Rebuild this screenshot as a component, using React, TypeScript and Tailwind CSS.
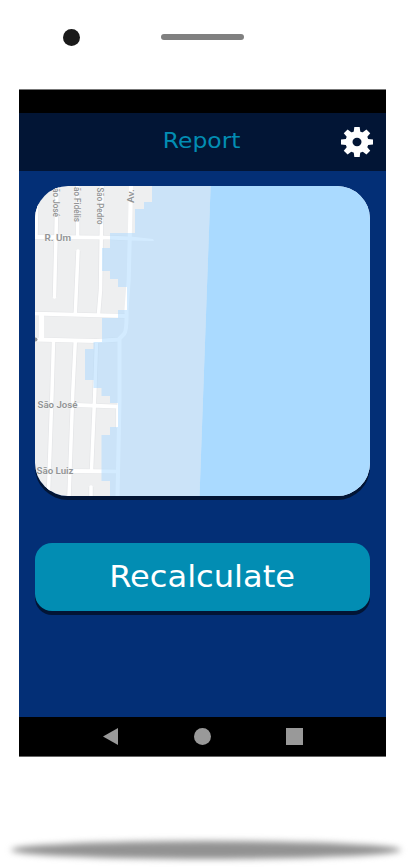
const roads = [
  'M37 186L36 237',
  'M57 186L56 237L54.5 297',
  'M77.6 186V237M78 251L75.3 314',
  'M102 186L100.5 290L98.5 314',
  'M53.5 341L52 392L48.3 497',
  'M75.3 341L72.8 392L69 497',
  'M96.5 341L94.7 395L91.5 470M91 487V497',
];

const mainRoads = [
  'M34 237L110 237.6L130 238.5',
  'M34 313.5L126 316',
  'M34 339.5L96 341L120 339.5',
  'M76 405L118 406.5V428',
  'M72 471L118 471.5',
];

function AreaMap() {
  return (
    <svg viewBox="35 186 335 310" className="block h-[310px] w-[335px]" aria-label="Map">
      <rect x="35" y="186" width="335" height="310" fill="#eeeff0" />
      <g fill="none" stroke="#e5e6e8" strokeWidth="5">
        {roads.map((d) => <path key={d} d={d} />)}
        {mainRoads.map((d) => <path key={d} d={d} />)}
      </g>
      <g fill="none" stroke="#fff" strokeWidth="3.5" strokeLinecap="round">
        {roads.map((d) => <path key={d} d={d} />)}
      </g>
      <g fill="none" stroke="#fff" strokeWidth="3.8">
        {mainRoads.map((d) => <path key={d} d={d} />)}
        <path d="M41.5 313V341" strokeWidth="5" />
        <path d="M131 186L128.7 280L126.5 310Q127 331 124 334L119.5 338.5V400L117.5 497" strokeWidth="4" />
      </g>
      <path d="M130 236.5L153 239L154 241L130 240.5Z" fill="#fff" />
      <path
        fill="#a8d8ff"
        fillOpacity="0.5"
        d="M152 186V202H144V209H135V233H110V248H102V271H110V279H118V287H127V310H118V318H102V342H93.5V349H85V380H93.5V388H101.5V396H110V403H118V427H110V435H101.5V481H110V496H199.5L207 286L210.6 186Z"
      />
      <path d="M210.6 186L207 286L199.5 496H370V186Z" fill="#aadaff" />
      <g
        fill="#929496"
        stroke="#f5f5f5"
        strokeWidth="1"
        paintOrder="stroke"
        fontSize="9.3"
        fontWeight="600"
        fontFamily="Roboto, 'Noto Sans', sans-serif"
      >
        <g fontSize="8.8" fontWeight="500">
          <text transform="translate(53 188) rotate(90)" textLength="29" lengthAdjust="spacingAndGlyphs">ão José</text>
          <text transform="translate(74.3 187) rotate(90)" textLength="35" lengthAdjust="spacingAndGlyphs">ão Fidélis</text>
          <text transform="translate(97.3 187.5) rotate(90)" textLength="37" lengthAdjust="spacingAndGlyphs">São Pedro</text>
          <text transform="translate(133.5 203) rotate(-90)" textLength="14" lengthAdjust="spacingAndGlyphs">Av.</text>
        </g>
        <text x="44.5" y="240.8" textLength="26.5" lengthAdjust="spacingAndGlyphs">R. Um</text>
        <text x="37.5" y="408" textLength="40" lengthAdjust="spacingAndGlyphs">São José</text>
        <text x="36.5" y="474.3" textLength="37" lengthAdjust="spacingAndGlyphs">São Luiz</text>
      </g>
      <circle cx="35.5" cy="339.5" r="2" fill="#929496" />
    </svg>
  );
}

function Gear() {
  return (
    <svg viewBox="-16 -16 32 32" preserveAspectRatio="none" className="h-[30px] w-8" aria-label="Settings">
      <g fill="#fff">
        <circle r="11.6" />
        {[0, 45, 90, 135].map((angle) => (
          <path key={angle} transform={`rotate(${angle})`} d="M-2.7-16H2.7L3.3-11V11L2.7 16H-2.7L-3.3 11V-11Z" />
        ))}
      </g>
      <circle r="4.5" fill="#021535" />
    </svg>
  );
}

export default function App() {
  return (
    <div className="flex h-[868px] w-[412px] flex-col overflow-hidden bg-white font-['DejaVu_Sans',sans-serif]">
      <div className="flex h-[89px] shrink-0 pl-[63px] pt-[29px]">
        <div className="h-[17px] w-[17px] rounded-full bg-[#1a1a1a]" />
        <div className="ml-[81px] mt-[5.4px] h-[5.6px] w-[83px] rounded-full bg-[#808080]" />
      </div>

      <main className="ml-[19px] flex h-[668px] w-[367px] shrink-0 flex-col bg-[#032f76]">
        <div className="h-6 shrink-0 border-t border-[#777] bg-black" />
        <header className="grid h-[58px] shrink-0 grid-cols-[1fr_auto_1fr] items-center bg-[#021535]">
          <span />
          <h1 className="-translate-x-[1px] scale-x-[1.09] pb-[2px] text-[21.5px] leading-7 text-[#028db3]">Report</h1>
          <button className="mr-[13px] justify-self-end">
            <Gear />
          </button>
        </header>

        <section className="flex flex-1 flex-col items-center pt-[15.4px]">
          <div className="h-[310px] w-[335px] overflow-hidden rounded-[33px] shadow-[0_4px_0_#021535]">
            <AreaMap />
          </div>
          <button className="mt-[46.6px] h-[68px] w-[335.5px] rounded-[17px] bg-[#028db3] text-[30px] leading-[68px] text-white shadow-[0_4px_0_#021535]">
            <span className="inline-block -translate-x-[0.7px] scale-x-[1.07]">Recalculate</span>
          </button>
        </section>

        <nav className="flex h-10 shrink-0 items-center justify-between border-b border-[#666] bg-black pl-[83.5px] pr-[83px]">
          <svg viewBox="0 0 15 17" className="h-[17px] w-[15px]" fill="#999"><path d="M15 0V17L0 8.5Z" /></svg>
          <div className="ml-[2px] h-[17px] w-[17px] rounded-full bg-[#999]" />
          <div className="h-[17px] w-[17px] bg-[#999]" />
        </nav>
      </main>

      <div className="ml-[11px] mt-[84px] h-[18px] w-[390px] shrink-0 rounded-[50%] bg-[#929292] blur-[3px]" />
    </div>
  );
}
